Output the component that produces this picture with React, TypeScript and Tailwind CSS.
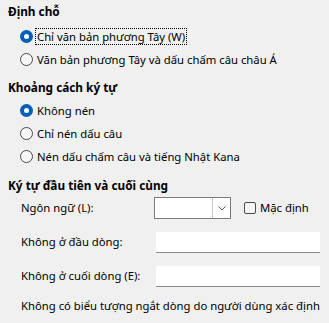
const Radio = ({ label, checked, focus }: { label: string; checked?: boolean; focus?: boolean }) => (
  <div className="flex items-center h-[23px] pl-[20px]">
    {checked ? (
      <span className="w-[13px] h-[13px] rounded-full bg-[#005fb8] flex items-center justify-center shrink-0">
        <span className="w-[5px] h-[5px] rounded-full bg-white" />
      </span>
    ) : (
      <span className="w-[13px] h-[13px] rounded-full border border-[#4a4a4a] bg-[#f7f7f7] shrink-0" />
    )}
    <span className={`ml-[3px] px-[1px] leading-[15px] ${focus ? 'outline-1 outline-dotted outline-black' : ''}`}>{label}</span>
  </div>
);

const Heading = ({ children, className = '' }: { children: string; className?: string }) => (
  <div className={`h-[18px] flex items-center pl-[8px] font-bold text-[11.8px] ${className}`}>{children}</div>
);

const TextBox = () => <div className="w-[164px] h-[21px] bg-white border-b border-[#8a8a8a]" />;

export default function App() {
  return (
    <div
      className="w-[329px] h-[323px] bg-[#f0f0f0] text-black text-[11.3px] pt-[3px] overflow-hidden whitespace-nowrap"
      style={{ fontFamily: '"Noto Sans", sans-serif' }}
    >
      <Heading>Định chỗ</Heading>
      <div className="mt-[4px]">
        <Radio label="Chỉ văn bản phương Tây (W)" checked focus />
        <Radio label="Văn bản phương Tây và dấu chấm câu châu Á" />
      </div>
      <Heading className="mt-[8px]">Khoảng cách ký tự</Heading>
      <div className="mt-[2px]">
        <Radio label="Không nén" checked />
        <Radio label="Chỉ nén dấu câu" />
        <Radio label="Nén dấu chấm câu và tiếng Nhật Kana" />
      </div>
      <Heading className="mt-[9px]">Ký tự đầu tiên và cuối cùng</Heading>
      <div className="mt-[2px] flex items-center h-[22px] pl-[21px]">
        <span className="w-[133px] shrink-0">Ngôn ngữ (L):</span>
        <div className="flex w-[77px] h-[22px] bg-white border border-[#7a7a7a] shrink-0">
          <div className="flex-1" />
          <div className="w-[18px] border-l border-[#c8c8c8] flex items-center justify-center">
            <svg width="8" height="5" viewBox="0 0 8 5">
              <path d="M0.5 0.5 L4 4 L7.5 0.5" fill="none" stroke="#555" strokeWidth="1" />
            </svg>
          </div>
        </div>
        <span className="ml-[13px] w-[12px] h-[12px] rounded-[2px] border border-[#4a4a4a] bg-[#f7f7f7] shrink-0" />
        <span className="ml-[4px]">Mặc định</span>
      </div>
      <div className="mt-[13px] flex items-center h-[21px] pl-[21px]">
        <span className="w-[135px] shrink-0">Không ở đầu dòng:</span>
        <TextBox />
      </div>
      <div className="mt-[13px] flex items-center h-[21px] pl-[21px]">
        <span className="w-[135px] shrink-0">Không ở cuối dòng (E):</span>
        <TextBox />
      </div>
      <div className="mt-[9px] h-[20px] flex items-center pl-[21px]">
        Không có biểu tượng ngắt dòng do người dùng xác định
      </div>
    </div>
  );
}
